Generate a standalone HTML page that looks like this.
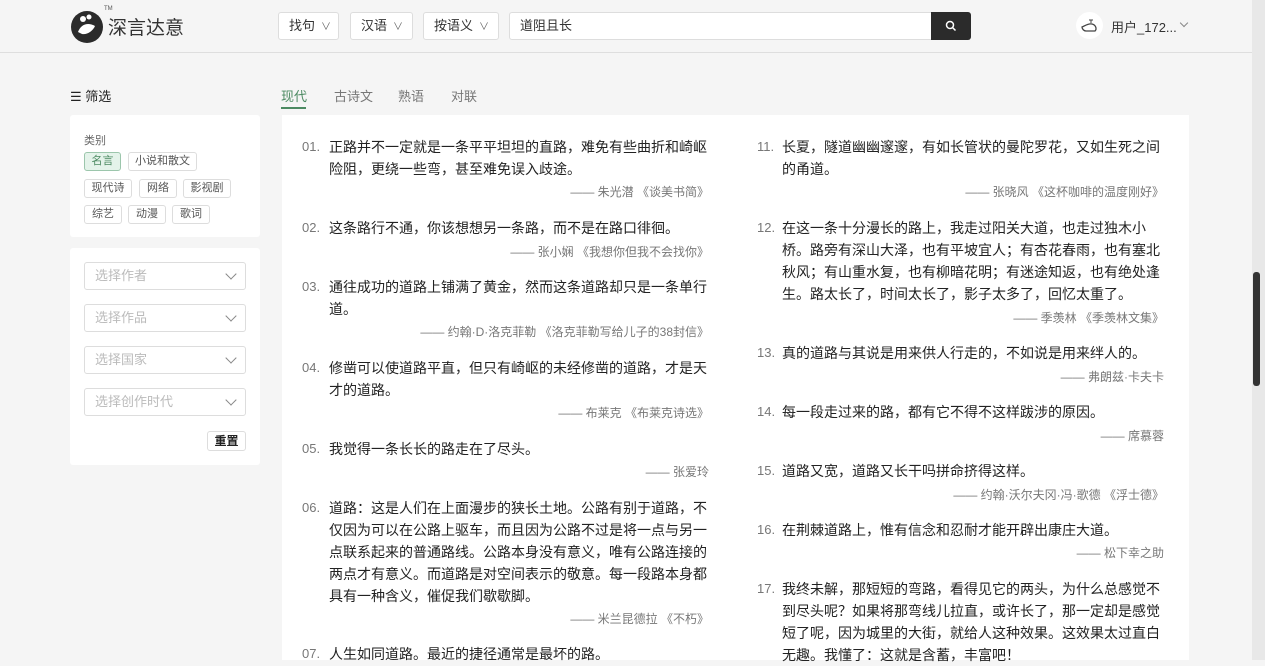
<!DOCTYPE html>
<html><head><meta charset="utf-8"><style>
*{margin:0;padding:0;box-sizing:border-box}
body{width:1265px;height:660px;overflow:hidden;background:#f5f5f5;font-family:"Liberation Sans","Noto Sans CJK SC",sans-serif;color:#333;position:relative}
.hdr{position:absolute;left:0;top:0;width:1252px;height:53px;background:#f5f5f5;border-bottom:1px solid #dedede}
.ab{position:absolute}
.btn{position:absolute;top:12px;height:28px;background:#fff;border:1px solid #ddd;border-radius:3px;font-size:13px;line-height:26px;padding-left:10px;color:#333}
.btn i{font-style:normal;color:#666;font-size:10px;margin-left:6px}
.tag{position:absolute;height:19px;border:1px solid #ddd;border-radius:3px;font-size:11px;line-height:17px;text-align:center;color:#555;background:#fff}
.sel{position:absolute;left:84px;width:162px;height:28px;border:1px solid #ddd;border-radius:3px;font-size:13px;line-height:26px;padding-left:10px;color:#bbb}
.sel:after{content:"";position:absolute;right:10px;top:7px;width:7px;height:7px;border-right:1px solid #888;border-bottom:1px solid #888;transform:rotate(45deg)}
.q{position:absolute;font-size:14px;line-height:22px;color:#222;white-space:nowrap}
.n{position:absolute;font-size:13px;line-height:22px;color:#777}
.s{position:absolute;font-size:12px;line-height:18px;color:#777;text-align:right}
</style></head><body>
<div class="hdr">
 <svg class="ab" style="left:69px;top:8px" width="36" height="36" viewBox="0 0 36 36"><circle cx="18" cy="19" r="16" fill="#2b2b2b"/><path d="M9 24c3-8 10-10 17-6-2 5-8 9-13 8z" fill="#fff"/><circle cx="14" cy="11" r="3" fill="#fff"/><circle cx="20" cy="9" r="2.5" fill="#fff"/></svg>
 <div class="ab" style="left:104px;top:6px;font-size:6px;color:#555">TM</div>
 <div class="ab" style="left:108px;top:13px;font-size:19px;color:#333">深言达意</div>
 <div class="btn" style="left:278px;width:61px">找句<i>∨</i></div>
 <div class="btn" style="left:350px;width:63px">汉语<i>∨</i></div>
 <div class="btn" style="left:423px;width:76px">按语义<i>∨</i></div>
 <div class="btn" style="left:509px;width:425px;border-radius:3px 0 0 3px">道阻且长</div>
 <div class="ab" style="left:931px;top:12px;width:40px;height:28px;background:#2b2b2b;border-radius:0 3px 3px 0"><svg style="position:absolute;left:14px;top:8px" width="12" height="12" viewBox="0 0 12 12"><circle cx="5" cy="5" r="3.5" fill="none" stroke="#fff" stroke-width="1.5"/><path d="M7.5 7.5L10.5 10.5" stroke="#fff" stroke-width="1.5"/></svg></div>
 <div class="ab" style="left:1076px;top:12px;width:27px;height:27px;border-radius:50%;background:#fff"><svg style="position:absolute;left:4px;top:6px" width="19" height="15" viewBox="0 0 19 15"><path d="M2 9c3-1 6-4 10-3 4 1 5 5 3 7H6C4 13 2 11 2 9z" fill="none" stroke="#444" stroke-width="1.3"/><path d="M11 5V2M9 2h4" stroke="#444"/></svg></div>
 <div class="ab" style="left:1111px;top:17px;font-size:13px;color:#333">用户_172...</div>
 <div class="ab" style="left:1181px;top:20px;width:6px;height:6px;border-right:1px solid #888;border-bottom:1px solid #888;transform:rotate(45deg)"></div>
</div>
<div class="ab" style="left:1252px;top:0;width:13px;height:660px;background:#e8e8e8"></div>
<div class="ab" style="left:1253px;top:272px;width:7px;height:114px;background:#333;border-radius:3px"></div>

<div class="ab" style="left:70px;top:86px;font-size:13px;color:#222">☰ 筛选</div>
<div class="ab" style="left:70px;top:115px;width:190px;height:122px;background:#fff;border-radius:3px"></div>
<div class="ab" style="left:84px;top:132px;font-size:11px;color:#666">类别</div>
<div class="tag" style="left:84px;top:152px;width:37px;background:#e4f3ea;border-color:#9cc6ac;color:#4c8a62">名言</div>
<div class="tag" style="left:128px;top:152px;width:69px">小说和散文</div>
<div class="tag" style="left:84px;top:179px;width:48px">现代诗</div>
<div class="tag" style="left:139px;top:179px;width:38px">网络</div>
<div class="tag" style="left:183px;top:179px;width:48px">影视剧</div>
<div class="tag" style="left:84px;top:205px;width:38px">综艺</div>
<div class="tag" style="left:128px;top:205px;width:38px">动漫</div>
<div class="tag" style="left:172px;top:205px;width:38px">歌词</div>
<div class="ab" style="left:70px;top:248px;width:190px;height:217px;background:#fff;border-radius:3px"></div>
<div class="sel" style="top:262px">选择作者</div>
<div class="sel" style="top:304px">选择作品</div>
<div class="sel" style="top:346px">选择国家</div>
<div class="sel" style="top:388px">选择创作时代</div>
<div class="ab" style="left:207px;top:431px;width:39px;height:20px;border:1px solid #ddd;border-radius:3px;font-size:12px;line-height:18px;text-align:center;color:#222;font-weight:bold">重置</div>

<div class="ab" style="left:281px;top:86px;font-size:13px;color:#4c8a62">现代</div>
<div class="ab" style="left:281px;top:107px;width:25px;height:2px;background:#4c8a62"></div>
<div class="ab" style="left:334px;top:86px;font-size:13px;color:#777">古诗文</div>
<div class="ab" style="left:398px;top:86px;font-size:13px;color:#777">熟语</div>
<div class="ab" style="left:451px;top:86px;font-size:13px;color:#777">对联</div>

<div class="ab" style="left:282px;top:115px;width:907px;height:545px;background:#fff"></div>

<div class="n" style="left:302px;top:136px">01.</div>
<div class="q" style="left:329px;top:136px">正路并不一定就是一条平平坦坦的直路，难免有些曲折和崎岖<br>险阻，更绕一些弯，甚至难免误入歧途。</div>
<div class="s" style="left:329px;top:183px;width:380px">—— 朱光潜 《谈美书简》</div>
<div class="n" style="left:302px;top:217px">02.</div>
<div class="q" style="left:329px;top:217px">这条路行不通，你该想想另一条路，而不是在路口徘徊。</div>
<div class="s" style="left:329px;top:243px;width:380px">—— 张小娴 《我想你但我不会找你》</div>
<div class="n" style="left:302px;top:276px">03.</div>
<div class="q" style="left:329px;top:276px">通往成功的道路上铺满了黄金，然而这条道路却只是一条单行<br>道。</div>
<div class="s" style="left:329px;top:323px;width:380px">—— 约翰·D·洛克菲勒 《洛克菲勒写给儿子的38封信》</div>
<div class="n" style="left:302px;top:357px">04.</div>
<div class="q" style="left:329px;top:357px">修凿可以使道路平直，但只有崎岖的未经修凿的道路，才是天<br>才的道路。</div>
<div class="s" style="left:329px;top:404px;width:380px">—— 布莱克 《布莱克诗选》</div>
<div class="n" style="left:302px;top:438px">05.</div>
<div class="q" style="left:329px;top:438px">我觉得一条长长的路走在了尽头。</div>
<div class="s" style="left:329px;top:463px;width:380px">—— 张爱玲</div>
<div class="n" style="left:302px;top:497px">06.</div>
<div class="q" style="left:329px;top:497px">道路：这是人们在上面漫步的狭长土地。公路有别于道路，不<br>仅因为可以在公路上驱车，而且因为公路不过是将一点与另一<br>点联系起来的普通路线。公路本身没有意义，唯有公路连接的<br>两点才有意义。而道路是对空间表示的敬意。每一段路本身都<br>具有一种含义，催促我们歇歇脚。</div>
<div class="s" style="left:329px;top:610px;width:380px">—— 米兰昆德拉 《不朽》</div>
<div class="n" style="left:302px;top:643px">07.</div>
<div class="q" style="left:329px;top:643px">人生如同道路。最近的捷径通常是最坏的路。</div>

<div class="n" style="left:757px;top:136px">11.</div>
<div class="q" style="left:782px;top:136px">长夏，隧道幽幽邃邃，有如长管状的曼陀罗花，又如生死之间<br>的甬道。</div>
<div class="s" style="left:782px;top:183px;width:382px">—— 张晓风 《这杯咖啡的温度刚好》</div>
<div class="n" style="left:757px;top:217px">12.</div>
<div class="q" style="left:782px;top:217px">在这一条十分漫长的路上，我走过阳关大道，也走过独木小<br>桥。路旁有深山大泽，也有平坡宜人；有杏花春雨，也有塞北<br>秋风；有山重水复，也有柳暗花明；有迷途知返，也有绝处逢<br>生。路太长了，时间太长了，影子太多了，回忆太重了。</div>
<div class="s" style="left:782px;top:309px;width:382px">—— 季羡林 《季羡林文集》</div>
<div class="n" style="left:757px;top:342px">13.</div>
<div class="q" style="left:782px;top:342px">真的道路与其说是用来供人行走的，不如说是用来绊人的。</div>
<div class="s" style="left:782px;top:368px;width:382px">—— 弗朗兹·卡夫卡</div>
<div class="n" style="left:757px;top:401px">14.</div>
<div class="q" style="left:782px;top:401px">每一段走过来的路，都有它不得不这样跋涉的原因。</div>
<div class="s" style="left:782px;top:427px;width:382px">—— 席慕蓉</div>
<div class="n" style="left:757px;top:460px">15.</div>
<div class="q" style="left:782px;top:460px">道路又宽，道路又长干吗拼命挤得这样。</div>
<div class="s" style="left:782px;top:486px;width:382px">—— 约翰·沃尔夫冈·冯·歌德 《浮士德》</div>
<div class="n" style="left:757px;top:519px">16.</div>
<div class="q" style="left:782px;top:519px">在荆棘道路上，惟有信念和忍耐才能开辟出康庄大道。</div>
<div class="s" style="left:782px;top:544px;width:382px">—— 松下幸之助</div>
<div class="n" style="left:757px;top:578px">17.</div>
<div class="q" style="left:782px;top:578px">我终未解，那短短的弯路，看得见它的两头，为什么总感觉不<br>到尽头呢？如果将那弯线儿拉直，或许长了，那一定却是感觉<br>短了呢，因为城里的大街，就给人这种效果。这效果太过直白<br>无趣。我懂了：这就是含蓄，丰富吧！</div>
</body></html>
